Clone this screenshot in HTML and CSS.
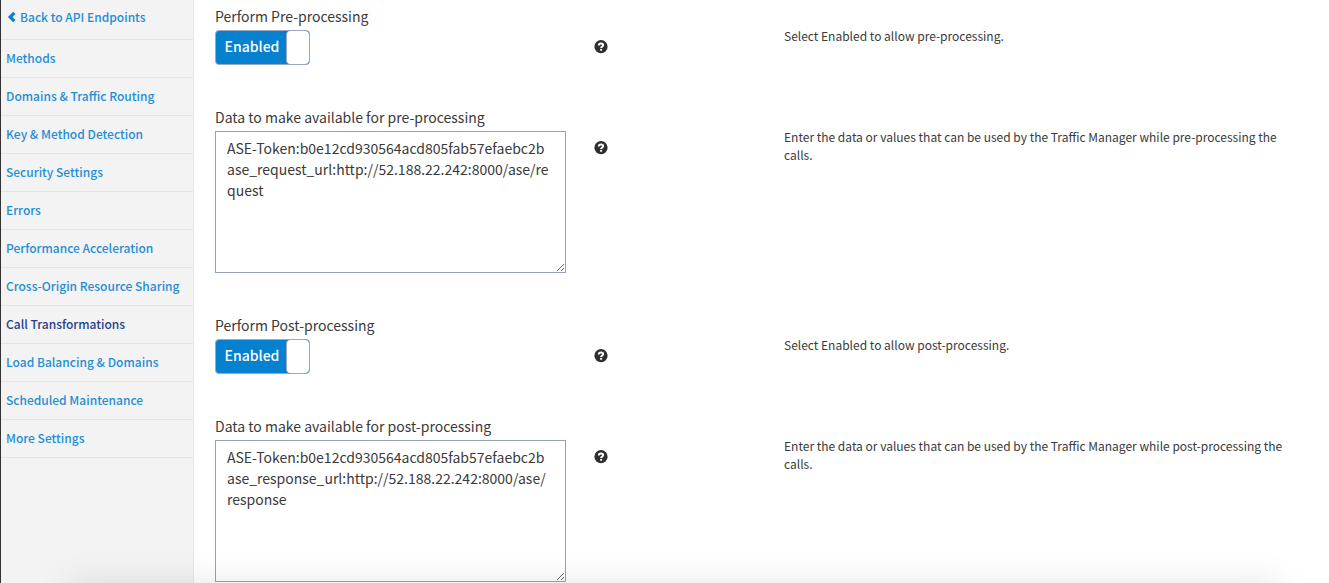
FILE: index.html
```html
<!DOCTYPE html>
<html lang="en">
<head>
<meta charset="utf-8">
<title>Call Transformations</title>
<link rel="stylesheet" href="styles.css">
</head>
<body>
<svg class="sprite" aria-hidden="true">
  <symbol id="help" viewBox="0 0 14 14">
    <circle cx="7" cy="6.7" r="6.6" fill="#2f2f2f"/>
    <path d="M4.8 5.4C4.8 4 5.8 3.5 7 3.5S9.2 4.2 9.2 5.3C9.2 6.6 7.1 6.6 7.1 8" fill="none" stroke="#fff" stroke-width="1.9"/>
    <path d="M6.1 8.9h2v1.8h-2z" fill="#fff"/>
  </symbol>
</svg>
<div class="page">
  <nav class="sidebar">
    <a class="back" href="#"><svg class="chevron" viewBox="0 0 9 12" aria-hidden="true"><path d="M6.2.8 8.5 2.9 5.6 6l2.9 3.1-2.3 2.1L.9 6z" fill="#0b84d0"/></svg>Back to API Endpoints</a>
    <a href="#">Methods</a>
    <a href="#">Domains &amp; Traffic Routing</a>
    <a href="#">Key &amp; Method Detection</a>
    <a href="#">Security Settings</a>
    <a href="#">Errors</a>
    <a href="#">Performance Acceleration</a>
    <a href="#">Cross-Origin Resource Sharing</a>
    <a class="current" href="#" aria-current="page">Call Transformations</a>
    <a href="#">Load Balancing &amp; Domains</a>
    <a href="#">Scheduled Maintenance</a>
    <a href="#">More Settings</a>
  </nav>
  <main class="form">
    <div class="row">
      <div class="field">
        <label id="pre-label" for="pre">Perform Pre-processing</label>
        <button class="toggle" id="pre" type="button" aria-pressed="true" aria-labelledby="pre-label"><span class="state">Enabled</span><span class="knob"></span></button>
      </div>
      <button class="help" type="button" aria-label="Help"><svg><use href="#help"/></svg></button>
      <p class="hint">Select Enabled to allow pre-processing.</p>
    </div>
    <div class="row data">
      <div class="field">
        <label for="pre-data">Data to make available for pre-processing</label>
        <textarea id="pre-data" spellcheck="false">ASE-Token:b0e12cd930564acd805fab57efaebc2b
ase_request_url:http://52.188.22.242:8000/ase/request</textarea>
      </div>
      <button class="help" type="button" aria-label="Help"><svg><use href="#help"/></svg></button>
      <p class="hint">Enter the data or values that can be used by the Traffic Manager while pre-processing the calls.</p>
    </div>
    <div class="row">
      <div class="field">
        <label id="post-label" for="post">Perform Post-processing</label>
        <button class="toggle" id="post" type="button" aria-pressed="true" aria-labelledby="post-label"><span class="state">Enabled</span><span class="knob"></span></button>
      </div>
      <button class="help" type="button" aria-label="Help"><svg><use href="#help"/></svg></button>
      <p class="hint">Select Enabled to allow post-processing.</p>
    </div>
    <div class="row data">
      <div class="field">
        <label for="post-data">Data to make available for post-processing</label>
        <textarea id="post-data" spellcheck="false">ASE-Token:b0e12cd930564acd805fab57efaebc2b
ase_response_url:http://52.188.22.242:8000/ase/response</textarea>
      </div>
      <button class="help" type="button" aria-label="Help"><svg><use href="#help"/></svg></button>
      <p class="hint">Enter the data or values that can be used by the Traffic Manager while post-processing the calls.</p>
    </div>
  </main>
</div>
<div class="edge-shadow"></div>
</body>
</html>
```

FILE: styles.css
```css
* { box-sizing: border-box; }

body {
  margin: 0;
  background: #fff;
  color: #3a3a3a;
  font-family: "Noto Sans CJK SC", "Noto Sans", sans-serif;
  font-size: 14px;
  line-height: 21px;
}

button, textarea { font: inherit; color: inherit; }

.sprite { display: none; }

.page {
  display: flex;
  min-height: 100vh;
}

.sidebar {
  flex: 0 0 194px;
  background: #f3f3f3;
  border-left: 1px solid #333;
  border-right: 1px solid #e8e8e8;
  font-size: 12px;
  font-weight: 500;
}

.sidebar a {
  display: flex;
  align-items: center;
  height: 38px;
  padding-left: 5px;
  border-bottom: 1px solid #e5e5e5;
  color: #1f8ed6;
  text-decoration: none;
  white-space: nowrap;
}

.sidebar .back {
  height: 40px;
  padding-bottom: 6px;
}

.sidebar a:not(.back) { padding-bottom: 2px; }

.sidebar .current { color: #27418c; }

.chevron {
  width: 9px;
  height: 12px;
  margin: 0 4px 0 1px;
}

.form {
  flex: 1;
  padding: 6px 17px 0 21px;
}

.row {
  display: grid;
  grid-template-columns: 351px 14px minmax(0, 1fr);
  column-gap: 28px;
  align-items: start;
  height: 101px;
}

.row.data { height: 208px; }
.row.data:last-child { height: 176px; }

.field {
  display: flex;
  flex-direction: column;
  align-items: flex-start;
  gap: 3px;
}

.toggle {
  display: flex;
  width: 95px;
  height: 35px;
  padding: 0;
  border: 1px solid #9aa8c0;
  border-radius: 4px;
  background: #0581d0;
  color: #fff;
  overflow: hidden;
}

.state {
  flex: 1;
  padding-left: 2px;
  line-height: 31px;
  font-weight: 500;
}

.knob {
  width: 23px;
  height: 33px;
  border-left: 1px solid #9aa8c0;
  border-radius: 4px;
  background: #fff;
}

textarea {
  display: block;
  width: 100%;
  height: 142px;
  padding: 6px 15px 6px 11px;
  border: 1px solid #96a2b8;
  background: #fff;
  word-break: break-all;
  overflow: hidden;
  outline: 0;
}

.help {
  width: 14px;
  height: 14px;
  margin-top: 34px;
  padding: 0;
  border: 0;
  background: none;
}

.help svg {
  display: block;
  width: 14px;
  height: 14px;
}

.hint {
  margin: 21px 0 0;
  padding: 0 10px 0 148px;
  font-size: 12px;
  line-height: 18px;
}

.edge-shadow {
  position: fixed;
  top: 100%;
  left: 70px;
  right: 50px;
  height: 40px;
  box-shadow: 0 0 36px rgba(0, 0, 0, 0.1);
  pointer-events: none;
}
```
